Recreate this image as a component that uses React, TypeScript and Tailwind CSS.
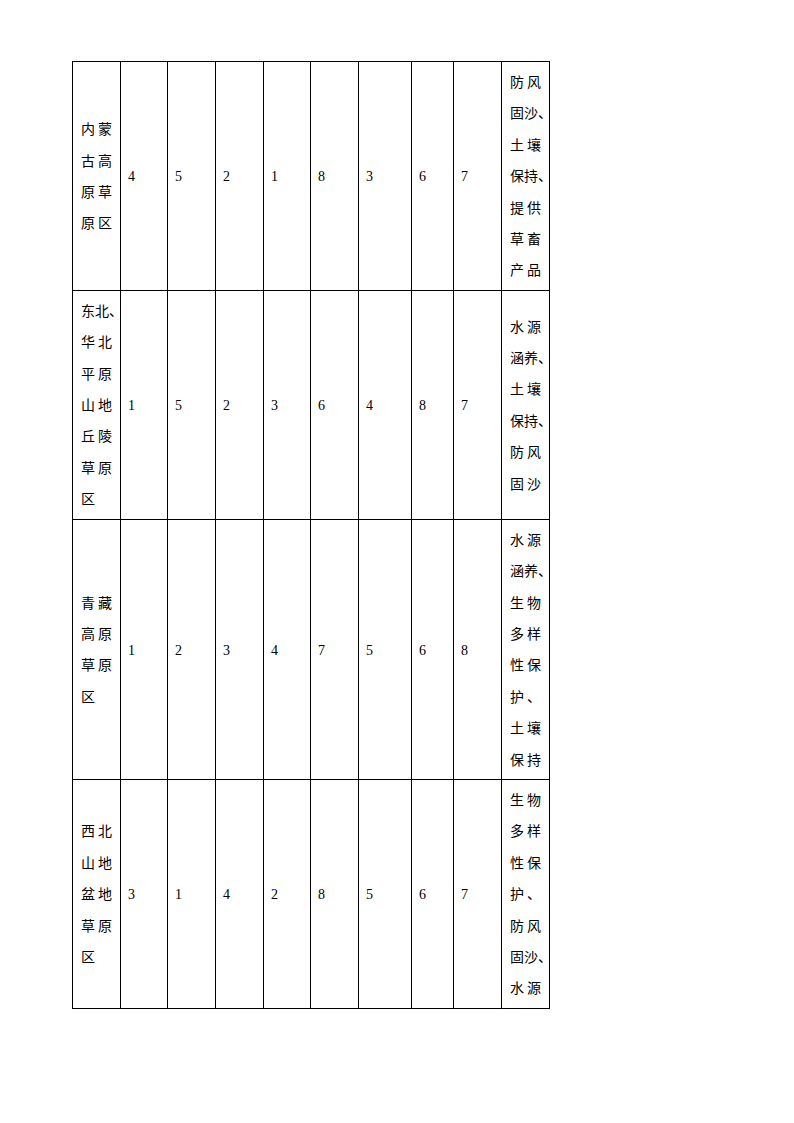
const rows: { region: string[]; ranks: number[]; services: string[] }[] = [
  {
    region: ["内蒙", "古高", "原草", "原区"],
    ranks: [4, 5, 2, 1, 8, 3, 6, 7],
    services: ["防风", "固沙、", "土壤", "保持、", "提供", "草畜", "产品"],
  },
  {
    region: ["东北、", "华北", "平原", "山地", "丘陵", "草原", "区"],
    ranks: [1, 5, 2, 3, 6, 4, 8, 7],
    services: ["水源", "涵养、", "土壤", "保持、", "防风", "固沙"],
  },
  {
    region: ["青藏", "高原", "草原", "区"],
    ranks: [1, 2, 3, 4, 7, 5, 6, 8],
    services: ["水源", "涵养、", "生物", "多样", "性保", "护、", "土壤", "保持"],
  },
  {
    region: ["西北", "山地", "盆地", "草原", "区"],
    ranks: [3, 1, 4, 2, 8, 5, 6, 7],
    services: ["生物", "多样", "性保", "护、", "防风", "固沙、", "水源"],
  },
];

const cjk = "font-['Noto_Sans_CJK_SC','Noto_Sans',sans-serif]";
const serif = "font-['Liberation_Serif','Times_New_Roman',serif]";

function Lines({ lines }: { lines: string[] }) {
  return (
    <div className={`${cjk} text-[14px] leading-[31.4px] text-black`}>
      {lines.map((line, i) =>
        line.length === 2 ? (
          <div key={i} className="flex w-[31px] justify-between whitespace-nowrap">
            <span>{line[0]}</span>
            <span>{line[1]}</span>
          </div>
        ) : (
          <div key={i} className="whitespace-nowrap">
            {line}
          </div>
        ),
      )}
    </div>
  );
}

const widths = [
  "w-[48px]",
  "w-[47px]",
  "w-[48px]",
  "w-[48px]",
  "w-[47px]",
  "w-[48px]",
  "w-[53px]",
  "w-[42px]",
  "w-[48px]",
  "w-[48px]",
];

export default function App() {
  return (
    <div className="min-h-[1123px] w-[794px] bg-white pl-[72px] pt-[61px]">
      <table className="w-[478px] table-fixed border-collapse">
        <colgroup>
          {widths.map((w, i) => (
            <col key={i} className={w} />
          ))}
        </colgroup>
        <tbody>
          {rows.map((row, r) => (
            <tr key={r}>
              <td className="overflow-visible border border-black py-[4px] pl-[8px] pr-0 align-middle">
                <Lines lines={row.region} />
              </td>
              {row.ranks.map((n, i) => (
                <td
                  key={i}
                  className={`border border-black pl-[7px] pt-[3px] align-middle ${serif} text-[14px] leading-none text-black`}
                >
                  {n}
                </td>
              ))}
              <td className="overflow-visible border border-black py-[4px] pl-[8px] pr-0 align-middle">
                <Lines lines={row.services} />
              </td>
            </tr>
          ))}
        </tbody>
      </table>
    </div>
  );
}
